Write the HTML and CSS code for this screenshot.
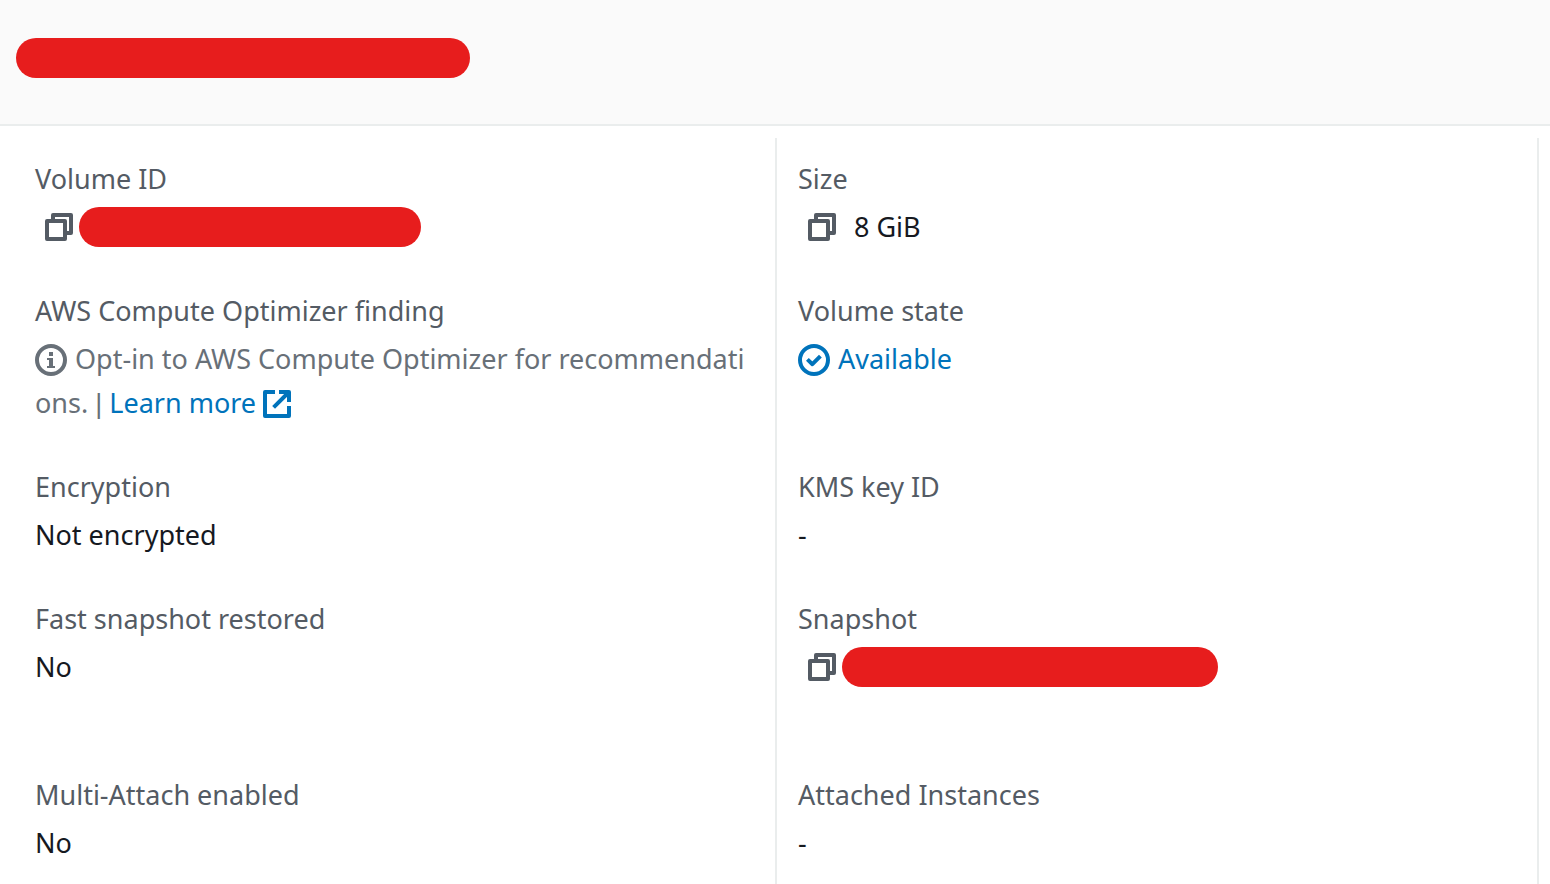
FILE: index.html
```html
<!DOCTYPE html>
<html lang="en">
<head>
    <meta charset="UTF-8">
    <meta name="viewport" content="width=device-width, initial-scale=1.0">
    <title>Volume details</title>
    <link rel="stylesheet" href="styles.css">
</head>
<body>
    <svg class="sprite" aria-hidden="true">
        <symbol id="icon-copy" viewBox="0 0 16 16">
            <path d="M2 5h9v9H2z"/>
            <path d="M5 5V2h9v9h-3"/>
        </symbol>
        <symbol id="icon-external" viewBox="0 0 16 16">
            <path d="M7 2H2v12h12V9"/>
            <path d="M9 2h5v5M14 2l-7.700 7.700"/>
            <path class="solid" d="M10.500 2H14v3.500z"/>
        </symbol>
        <symbol id="icon-info" viewBox="0 0 16 16">
            <circle cx="8" cy="8" r="7"/>
            <path class="solid" d="M7 4h2v2H7zM6 7h3v4h1v1H6v-1h1V8H6z"/>
        </symbol>
        <symbol id="icon-check" viewBox="0 0 16 16">
            <circle cx="8" cy="8" r="7"/>
            <path d="M4.700 7.700l2.500 2.400 4-4"/>
        </symbol>
    </svg>

    <header class="panel-header">
        <h1 class="redacted redacted-title" aria-label="Volume"></h1>
    </header>

    <main class="panel-body">
        <dl class="details">
            <div class="field">
                <dt>Volume ID</dt>
                <dd class="copyable">
                    <button class="copy" type="button" aria-label="Copy volume ID"><svg class="icon"><use href="#icon-copy"/></svg></button>
                    <span class="redacted redacted-volume"></span>
                </dd>
            </div>
            <div class="field">
                <dt>Size</dt>
                <dd class="copyable">
                    <button class="copy" type="button" aria-label="Copy size"><svg class="icon"><use href="#icon-copy"/></svg></button>
                    <span class="copy-text">8 GiB</span>
                </dd>
            </div>

            <div class="field">
                <dt>AWS Compute Optimizer finding</dt>
                <dd class="muted"><svg class="icon icon-before"><use href="#icon-info"/></svg>Opt-in to AWS Compute Optimizer for recommendations. <span class="divider">|</span> <a href="#">Learn more<svg class="icon icon-after"><use href="#icon-external"/></svg></a></dd>
            </div>
            <div class="field">
                <dt>Volume state</dt>
                <dd class="available"><svg class="icon icon-before"><use href="#icon-check"/></svg>Available</dd>
            </div>

            <div class="field">
                <dt>Encryption</dt>
                <dd>Not encrypted</dd>
            </div>
            <div class="field">
                <dt>KMS key ID</dt>
                <dd>-</dd>
            </div>

            <div class="field field-tall">
                <dt>Fast snapshot restored</dt>
                <dd>No</dd>
            </div>
            <div class="field field-tall">
                <dt>Snapshot</dt>
                <dd class="copyable">
                    <button class="copy" type="button" aria-label="Copy snapshot ID"><svg class="icon"><use href="#icon-copy"/></svg></button>
                    <span class="redacted redacted-snapshot"></span>
                </dd>
            </div>

            <div class="field">
                <dt>Multi-Attach enabled</dt>
                <dd>No</dd>
            </div>
            <div class="field">
                <dt>Attached Instances</dt>
                <dd>-</dd>
            </div>
        </dl>
    </main>
</body>
</html>
```
FILE: styles.css
```css
* {
    box-sizing: border-box;
}
body {
    margin: 0;
    background-color: #ffffff;
    color: #16191f;
    font-family: "Amazon Ember", "Noto Sans", "Open Sans", sans-serif;
    font-size: 27px;
    line-height: 44px;
}
.sprite {
    display: none;
}
.panel-header {
    padding: 38px 16px 46px;
    background-color: #fafafa;
    border-bottom: 2px solid #eaeded;
}
.panel-body {
    padding: 12px 11px 0 13px;
}
.redacted {
    display: block;
    height: 40px;
    margin: 0;
    border-radius: 20px;
    background-color: #e71d1d;
}
.redacted-title {
    width: 454px;
}
.redacted-volume {
    width: 342px;
    margin-left: 4px;
}
.redacted-snapshot {
    width: 376px;
    margin-left: 4px;
}
.details {
    display: grid;
    grid-template-columns: 1fr 1fr;
    margin: 0;
    border-right: 2px solid #eaeded;
}
.field {
    padding: 0 20px 40px;
    border-left: 2px solid #eaeded;
}
.field:nth-child(odd) {
    border-left-color: transparent;
}
.field:nth-child(even) {
    padding-left: 21px;
}
.field:nth-child(-n+2) {
    padding-top: 19px;
}
.field:nth-last-child(-n+2) {
    padding-bottom: 19px;
}
.field-tall dd {
    margin-bottom: 44px;
}
dt {
    margin-bottom: 4px;
    color: #545b64;
}
dd {
    margin: 0;
    word-break: break-all;
}
.copyable {
    display: flex;
    align-items: center;
    height: 44px;
}
.copy {
    display: flex;
    margin: 0 0 0 8px;
    padding: 0;
    border: none;
    background: none;
    color: #545b64;
    cursor: pointer;
}
.copy-text {
    margin-left: 16px;
}
.muted {
    color: #687078;
}
.divider {
    font-family: "Liberation Sans", Arial, sans-serif;
    line-height: 1;
}
.available,
a {
    color: #0073bb;
}
a {
    text-decoration: none;
}
a:hover {
    text-decoration: underline;
}
.icon {
    width: 32px;
    height: 32px;
    fill: none;
    stroke: currentColor;
    stroke-width: 2;
    stroke-linejoin: round;
}
.solid {
    fill: currentColor;
    stroke: none;
}
.icon-before {
    margin-right: 8px;
    vertical-align: -7px;
}
.icon-after {
    margin-left: 5px;
    vertical-align: -7px;
}
```
